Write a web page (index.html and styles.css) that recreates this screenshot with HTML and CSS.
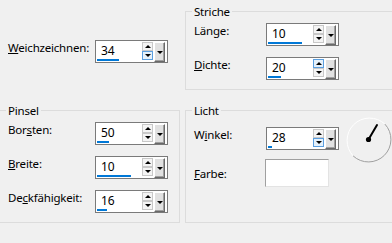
FILE: index.html
```html
<!DOCTYPE html>
<html lang="de">
<head>
    <meta charset="UTF-8">
    <title>Kreide</title>
    <link rel="stylesheet" href="styles.css">
</head>
<body>
    <div class="dialog">
        <div class="top-left">
            <div class="row">
                <span class="label wide"><u>W</u>eichzeichnen:</span>
                <div class="spin">
                    <div class="spin-field"><span class="spin-value">34</span><span class="spin-bar" style="width: 22px"></span></div>
                    <div class="spin-updown"><span class="spin-btn"><i class="tri-up"></i></span><span class="spin-btn hot"><i class="tri-down"></i></span></div>
                    <div class="spin-drop"><i class="tri-down"></i></div>
                </div>
            </div>
        </div>

        <fieldset class="group">
            <legend>Striche</legend>
            <div class="row">
                <span class="label narrow">Län<u>g</u>e:</span>
                <div class="spin">
                    <div class="spin-field"><span class="spin-value">10</span><span class="spin-bar" style="width: 34px"></span></div>
                    <div class="spin-updown"><span class="spin-btn"><i class="tri-up"></i></span><span class="spin-btn"><i class="tri-down"></i></span></div>
                    <div class="spin-drop"><i class="tri-down"></i></div>
                </div>
            </div>
            <div class="row">
                <span class="label narrow"><u>D</u>ichte:</span>
                <div class="spin">
                    <div class="spin-field"><span class="spin-value">20</span><span class="spin-bar" style="width: 13px"></span></div>
                    <div class="spin-updown"><span class="spin-btn hot"><i class="tri-up"></i></span><span class="spin-btn"><i class="tri-down"></i></span></div>
                    <div class="spin-drop"><i class="tri-down"></i></div>
                </div>
            </div>
        </fieldset>

        <fieldset class="group">
            <legend>Pinsel</legend>
            <div class="row">
                <span class="label wide">Bor<u>s</u>ten:</span>
                <div class="spin">
                    <div class="spin-field"><span class="spin-value">50</span><span class="spin-bar" style="width: 12px"></span></div>
                    <div class="spin-updown"><span class="spin-btn"><i class="tri-up"></i></span><span class="spin-btn"><i class="tri-down"></i></span></div>
                    <div class="spin-drop"><i class="tri-down"></i></div>
                </div>
            </div>
            <div class="row">
                <span class="label wide"><u>B</u>reite:</span>
                <div class="spin">
                    <div class="spin-field"><span class="spin-value">10</span><span class="spin-bar" style="width: 34px"></span></div>
                    <div class="spin-updown"><span class="spin-btn"><i class="tri-up"></i></span><span class="spin-btn"><i class="tri-down"></i></span></div>
                    <div class="spin-drop"><i class="tri-down"></i></div>
                </div>
            </div>
            <div class="row">
                <span class="label wide">De<u>c</u>kfähigkeit:</span>
                <div class="spin">
                    <div class="spin-field"><span class="spin-value">16</span><span class="spin-bar" style="width: 10px"></span></div>
                    <div class="spin-updown"><span class="spin-btn"><i class="tri-up"></i></span><span class="spin-btn"><i class="tri-down"></i></span></div>
                    <div class="spin-drop"><i class="tri-down"></i></div>
                </div>
            </div>
        </fieldset>

        <fieldset class="group">
            <legend>Licht</legend>
            <div class="row angle-row">
                <span class="label narrow">W<u>i</u>nkel:</span>
                <div class="spin">
                    <div class="spin-field"><span class="spin-value">28</span><span class="spin-bar" style="width: 4px"></span></div>
                    <div class="spin-updown"><span class="spin-btn"><i class="tri-up"></i></span><span class="spin-btn hot"><i class="tri-down"></i></span></div>
                    <div class="spin-drop"><i class="tri-down"></i></div>
                </div>
                <svg class="dial" width="46" height="46" viewBox="0 0 46 46">
                    <path d="M38.9 7.1 A22.5 22.5 0 0 0 7.1 38.9" fill="none" stroke="#ffffff" stroke-width="1"/>
                    <path d="M7.1 38.9 A22.5 22.5 0 0 0 38.9 7.1" fill="none" stroke="#a0a0a0" stroke-width="1"/>
                    <line x1="22.5" y1="22.5" x2="31" y2="8" stroke="#000" stroke-width="2" stroke-linecap="round"/>
                    <circle cx="22.5" cy="22.5" r="2.6" fill="#000"/>
                </svg>
            </div>
            <div class="row color-row">
                <span class="label narrow"><u>F</u>arbe:</span>
                <div class="swatch"></div>
            </div>
        </fieldset>
    </div>
</body>
</html>
```

FILE: styles.css
```css
html, body {
    margin: 0;
    padding: 0;
    overflow: hidden;
}
body {
    width: 392px;
    height: 243px;
    background-color: #f0f0f0;
    color: #000000;
    font-family: "Noto Sans", sans-serif;
    font-size: 11.5px;
    letter-spacing: -0.2px;
    line-height: 16px;
}
.dialog {
    display: grid;
    grid-template-columns: 181px 215px;
    column-gap: 5px;
    row-gap: 13px;
    margin-left: -1px;
    padding-top: 4px;
}
.top-left {
    padding: 36px 0 0 7px;
}
.group {
    margin: 0;
    min-width: 0;
    padding: 4px 0 9px 6px;
    border: 1px solid #dcdcdc;
}
.group legend {
    padding: 0 2px;
    line-height: 15px;
}
.row {
    display: flex;
    align-items: flex-start;
    padding-left: 2px;
}
.row + .row {
    margin-top: 11px;
}
.label {
    flex: none;
    white-space: nowrap;
}
.label u {
    text-decoration-thickness: 1px;
    text-underline-offset: 1px;
}
.label.wide {
    width: 87px;
}
.label.narrow {
    width: 72px;
}
.spin {
    display: flex;
    flex: none;
    width: 73px;
    height: 23px;
    box-sizing: border-box;
    border: 1px solid #7a7a7a;
    background: #ffffff;
}
.spin-field {
    flex: 1;
    display: flex;
    flex-direction: column;
    padding-left: 1px;
}
.spin-value {
    padding: 2px 0 0 4px;
    height: 16px;
    line-height: 16px;
    font-size: 12px;
}
.spin-bar {
    height: 2px;
    background-color: #0078d7;
}
.spin-updown {
    width: 11px;
    display: flex;
    flex-direction: column;
    padding-top: 1px;
}
.spin-btn {
    height: 9px;
    box-sizing: border-box;
    border: 1px solid #c8c8c8;
    background: #f4f4f4;
    display: flex;
    align-items: center;
    justify-content: center;
}
.spin-btn.hot {
    border-color: #5b9fe0;
    background: #e5f1fb;
}
.spin-drop {
    width: 11px;
    height: 20px;
    margin: 1px 2px 0 1px;
    box-sizing: border-box;
    background: #e1e1e1;
    border: 1px solid;
    border-color: #ffffff #696969 #696969 #ffffff;
    box-shadow: inset -1px -1px 0 #a0a0a0;
    display: flex;
    align-items: center;
    justify-content: center;
}
.tri-up,
.tri-down {
    width: 0;
    height: 0;
    border-left: 3px solid transparent;
    border-right: 3px solid transparent;
}
.tri-up {
    border-bottom: 3px solid #000000;
}
.tri-down {
    border-top: 3px solid #000000;
}
.angle-row {
    margin-top: 5px;
}
.dial {
    flex: none;
    margin: -10px 0 -13px 7px;
}
.row.color-row {
    margin-top: 9px;
}
.color-row .label {
    margin-top: 7px;
}
.swatch {
    width: 64px;
    height: 28px;
    margin-left: -1px;
    box-sizing: border-box;
    background: #ffffff;
    border: 1px solid;
    border-color: #a0a0a0 #e3e3e3 #e3e3e3 #a0a0a0;
}
```
